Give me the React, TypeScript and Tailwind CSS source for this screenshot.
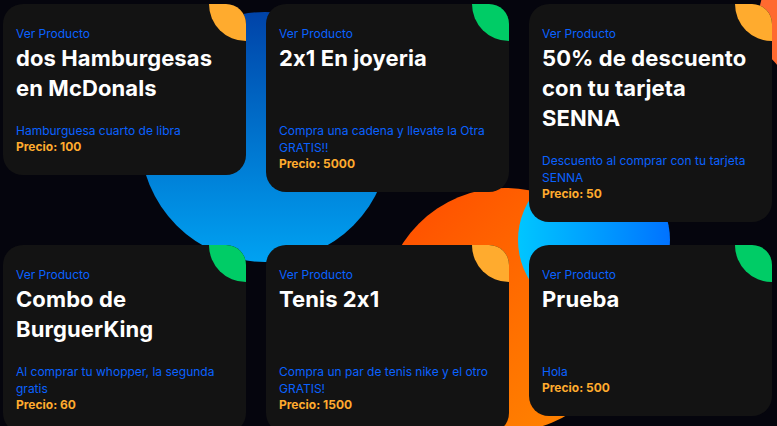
const offers = [
  { title: "dos Hamburgesas en McDonals", desc: "Hamburguesa cuarto de libra", price: 100, accent: "orange" },
  { title: "2x1 En joyeria", desc: "Compra una cadena y llevate la Otra GRATIS!!", price: 5000, accent: "green" },
  { title: "50% de descuento con tu tarjeta SENNA", desc: "Descuento al comprar con tu tarjeta SENNA", price: 50, accent: "orange" },
  { title: "Combo de BurguerKing", desc: "Al comprar tu whopper, la segunda gratis", price: 60, accent: "green" },
  { title: "Tenis 2x1", desc: "Compra un par de tenis nike y el otro GRATIS!", price: 1500, accent: "orange" },
  { title: "Prueba", desc: "Hola", price: 500, accent: "green" },
];

function OfferCard({ title, desc, price, accent }: (typeof offers)[number]) {
  return (
    <div className="relative overflow-hidden rounded-[20px] bg-[#131313] px-[13px] pt-[21px] pb-[20px]">
      {/* corner accent */}
      <span
        className={
          "absolute -top-[37px] -right-[37px] h-[74px] w-[74px] rounded-full " +
          (accent === "orange" ? "bg-[#ffab2e]" : "bg-[#00cc66]")
        }
      />
      <p className="text-[12px] leading-[18px] text-[#0a62ff]">Ver Producto</p>
      <h2 className="min-h-[60px] pr-[10px] text-[22px] font-bold leading-[30px] tracking-[0.1px] text-white">
        {title}
      </h2>
      <p className="mt-[19px] text-[12px] leading-[17px] text-[#0a62ff]">{desc}</p>
      <p className="text-[12px] font-bold leading-[16px] text-[#ffab2e]">Precio: {price}</p>
    </div>
  );
}

export default function App() {
  return (
    <div
      className="relative h-[426px] w-full overflow-hidden bg-[#05050d] [font-feature-settings:'calt'_0]"
      style={{ fontFamily: "Inter, 'Noto Sans', sans-serif" }}
    >
      {/* background blobs */}
      <div className="absolute left-[140px] top-[12px] h-[250px] w-[250px] rounded-full bg-gradient-to-b from-[#0043a8] to-[#00a2f2]" />
      <div className="absolute left-[383px] top-[188px] h-[244px] w-[244px] rounded-full bg-gradient-to-br from-[#ff4800] to-[#ff8a00]" />
      <div className="absolute left-[518px] top-[164px] h-[152px] w-[152px] rounded-full bg-gradient-to-r from-[#00c6ff] to-[#0072ff]" />
      <div className="absolute left-[758px] top-[-42px] h-[124px] w-[124px] rounded-full bg-[#ff6a30]" />

      <div className="relative box-content grid w-[769px] grid-cols-3 items-start gap-x-[20px] gap-y-[23px] pl-[3px] pt-[4px]">
        {offers.map((o) => (
          <OfferCard key={o.title} {...o} />
        ))}
      </div>
    </div>
  );
}
